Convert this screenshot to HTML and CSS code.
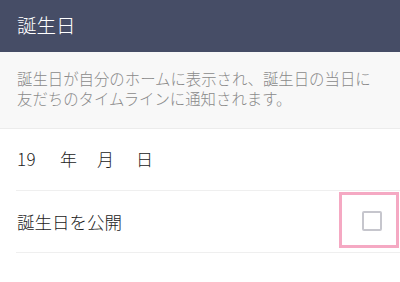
FILE: index.html
```html
<!DOCTYPE html>
<html lang="ja">
<head>
<meta charset="utf-8">
<link rel="stylesheet" href="styles.css">
</head>
<body>
<div class="screen">
  <header class="topbar"><h1 class="title">誕生日</h1></header>
  <section class="desc">
    <p class="desc-text">誕生日が自分のホームに表示され、誕生日の当日に<br>友だちのタイムラインに通知されます。</p>
  </section>
  <div class="rows">
    <div class="row date-row">
      <span class="year">19</span><span class="unit u-year">年</span><span class="unit u-month">月</span><span class="unit u-day">日</span>
    </div>
    <div class="row">
      <span class="label">誕生日を公開</span>
      <span class="check-wrap">
        <span class="checkbox"></span>
        <span class="highlight"></span>
      </span>
    </div>
  </div>
</div>
</body>
</html>
```
FILE: styles.css
```css
* { box-sizing: border-box; }
html, body { margin: 0; padding: 0; }
body {
  width: 400px;
  height: 282px;
  overflow: hidden;
  background: #ffffff;
  font-family: "Noto Sans CJK JP", "Noto Sans", sans-serif;
  font-weight: 300;
}
.screen { width: 400px; }
.topbar {
  height: 52px;
  background: #464d66;
  display: flex;
  align-items: center;
  padding: 0 0 3px 17px;
}
.title {
  margin: 0;
  font-size: 19.5px;
  font-weight: 300;
  color: #ffffff;
  line-height: 1;
}
.desc {
  height: 77px;
  background: #f8f8f8;
  border-bottom: 1px solid #ececec;
  padding: 16px 0 0 17px;
}
.desc-text {
  margin: 0;
  font-size: 15.4px;
  line-height: 20px;
  color: #8a8a8a;
}
.rows { padding-left: 16px; }
.row {
  height: 62px;
  border-bottom: 1px solid #efefef;
  display: flex;
  align-items: center;
  padding-left: 1px;
  padding-bottom: 1px;
  position: relative;
}
.date-row { font-size: 17px; color: #222; padding-bottom: 2px; }
.year { width: 43px; letter-spacing: 0.5px; }
.unit { display: inline-block; }
.u-year { width: 37px; }
.u-month { width: 39px; }
.label { font-size: 17.5px; color: #222; }
.check-wrap {
  margin-left: auto;
  margin-right: 18px;
  position: relative;
  width: 20px;
  height: 20px;
}
.checkbox {
  display: block;
  width: 20px;
  height: 20px;
  border: 2px solid #c6c6cd;
  border-radius: 2px;
  background: #fff;
}
.highlight {
  position: absolute;
  left: -23px;
  top: -19px;
  width: 60px;
  height: 56px;
  border: 3px solid #f5a9c3;
}
```
